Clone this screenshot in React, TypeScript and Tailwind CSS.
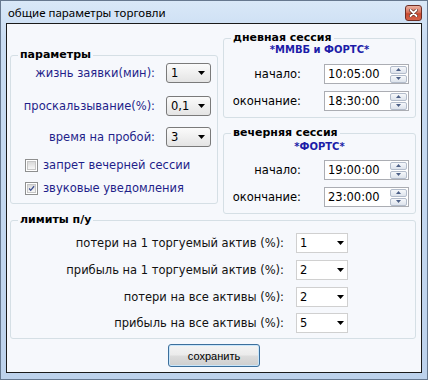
import type { ReactNode } from 'react';

const Arrow = () => (
  <svg width="7" height="4" viewBox="0 0 7 4">
    <path d="M0 0h7L3.5 4z" fill="#000" />
  </svg>
);

function Group({ title, className = '', children }: { title: string; className?: string; children: ReactNode }) {
  return (
    <fieldset className={`rounded-[3px] border border-[#d5dfe5] ${className}`}>
      <legend className="ml-[7px] px-[2px] text-[11px] leading-[14px] font-bold text-black">{title}</legend>
      {children}
    </fieldset>
  );
}

function ParamRow({ label, value, className = '' }: { label: string; value: string; className?: string }) {
  return (
    <div className={`flex items-center justify-end ${className}`}>
      <span className="text-[#1f1f8a]">{label}</span>
      <div className="ml-[11px] flex h-[20px] w-[45px] items-center justify-between rounded-[3px] border border-[#7a7a7a] bg-[linear-gradient(#fbfbfb,#e4e4e4)] pl-[4px] pr-[5px] text-black">
        <span>{value}</span>
        <Arrow />
      </div>
    </div>
  );
}

function Check({ label, checked, className = '' }: { label: string; checked?: boolean; className?: string }) {
  return (
    <div className={`ml-[14px] flex h-[16px] items-center ${className}`}>
      <div className="flex h-[13px] w-[13px] items-center justify-center border border-[#8e8f8f] bg-white">
        <div className="flex h-[9px] w-[9px] items-center justify-center border border-[#c6c6c6] bg-[linear-gradient(#d9d9d9,#f7f7f7)]">
          {checked && (
            <svg width="9" height="9" viewBox="0 0 9 9">
              <path d="M1.5 4.5l2 2.3L7.8 1.6" stroke="#3b4d8f" strokeWidth="1.6" fill="none" />
            </svg>
          )}
        </div>
      </div>
      <span className="ml-[5px] text-[#1f1f8a]">{label}</span>
    </div>
  );
}

function TimeRow({ label, value, className = '' }: { label: string; value: string; className?: string }) {
  return (
    <div className={`flex items-center justify-end pr-[6px] ${className}`}>
      <span className="text-black">{label}</span>
      <div className="ml-[23px] flex h-[20px] w-[85px] items-center justify-between border border-[#abadb3] bg-white pl-[3px] pr-[1px]">
        <span className="text-black">{value}</span>
        <div className="flex flex-col gap-[1px]">
          <div className="flex h-[8px] w-[17px] items-center justify-center rounded-[2px] border border-[#b3bccb] bg-[linear-gradient(#f6f8fb,#dde3ec)]">
            <svg width="5" height="3" viewBox="0 0 5 3"><path d="M0 3h5L2.5 0z" fill="#4c5f86" /></svg>
          </div>
          <div className="flex h-[8px] w-[17px] items-center justify-center rounded-[2px] border border-[#b3bccb] bg-[linear-gradient(#f6f8fb,#dde3ec)]">
            <svg width="5" height="3" viewBox="0 0 5 3"><path d="M0 0h5L2.5 3z" fill="#4c5f86" /></svg>
          </div>
        </div>
      </div>
    </div>
  );
}

function LimitRow({ label, value, className = '' }: { label: string; value: string; className?: string }) {
  return (
    <div className={`flex items-center justify-end pr-[67px] ${className}`}>
      <span className="text-[#111]">{label}</span>
      <div className="ml-[12px] flex h-[20px] w-[52px] items-center justify-between border border-[#d0d0d0] bg-white pl-[3px] pr-[3px] text-black">
        <span>{value}</span>
        <Arrow />
      </div>
    </div>
  );
}

export default function App() {
  return (
    <div className="flex h-[380px] w-[428px] flex-col border border-[#66788f] bg-[linear-gradient(#d9e8f8_0%,#c9dcf2_10%,#bdd2ec_100%)] px-[5px] pb-[6px] font-['DejaVu_Sans',sans-serif] text-[11.5px] leading-[14px]">
      {/* title bar */}
      <div className="flex h-[22px] items-start justify-between">
        <span className="ml-[2px] mt-[5px] font-['Noto_Sans',sans-serif] text-[11.5px] leading-[14px] text-black">
          общие параметры торговли
        </span>
        <div className="mt-[4px] flex h-[16px] w-[17px] items-center justify-center rounded-[3px] border border-[#6e2e25] bg-[linear-gradient(#eab0a0_0%,#d9735d_45%,#c94a30_55%,#d4624a_100%)]">
          <svg width="9" height="8" viewBox="0 0 9 8">
            <path d="M1.5 1l6 6M7.5 1l-6 6" stroke="#5a2a22" strokeWidth="3.2" strokeLinecap="round" />
            <path d="M1.5 1l6 6M7.5 1l-6 6" stroke="#fff" strokeWidth="1.8" strokeLinecap="round" />
          </svg>
        </div>
      </div>

      {/* client area */}
      <div className="flex h-[350px] flex-col border border-[#1a1a1a] bg-[#f6f8fc] pl-[3px] pr-[5px]">
        <div className="flex items-start gap-[5px] pt-[7px]">
          <Group title="параметры" className="mt-[17px] w-[208px] pb-[7px] pr-[6px]">
            <div className="pt-[1px]">
              <ParamRow label="жизнь заявки(мин):" value="1" />
              <ParamRow label="проскальзывание(%):" value="0,1" className="mt-[13px]" />
              <ParamRow label="время на пробой:" value="3" className="mt-[11px]" />
            </div>
            <Check label="запрет вечерней сессии" className="mt-[10px]" />
            <Check label="звуковые уведомления" checked className="mt-[7px]" />
          </Group>

          <div className="flex flex-1 flex-col">
            <Group title="дневная сессия" className="pb-[6px]">
              <div className="-mt-[1px] text-center text-[10px] leading-[12px] font-bold text-[#1c1ca8]">*ММВБ и ФОРТС*</div>
              <TimeRow label="начало:" value="10:05:00" className="mt-[8px]" />
              <TimeRow label="окончание:" value="18:30:00" className="mt-[7px]" />
            </Group>
            <Group title="вечерняя сессия" className="mt-[8px] pb-[6px]">
              <div className="mt-[1px] text-center text-[10px] leading-[12px] font-bold text-[#1c1ca8]">*ФОРТС*</div>
              <TimeRow label="начало:" value="19:00:00" className="mt-[7px]" />
              <TimeRow label="окончание:" value="23:00:00" className="mt-[7px]" />
            </Group>
          </div>
        </div>

        <Group title="лимиты п/у" className="-mt-[1px] pb-[5px]">
          <div className="pt-[6px]">
            <LimitRow label="потери на 1 торгуемый актив (%):" value="1" />
            <LimitRow label="прибыль на 1 торгуемый актив (%):" value="2" className="mt-[7px]" />
            <LimitRow label="потери на все активы (%):" value="2" className="mt-[7px]" />
            <LimitRow label="прибыль на все активы (%):" value="5" className="mt-[6px]" />
          </div>
        </Group>

        <div className="mt-[5px] flex justify-center pl-[2px]">
          <button className="h-[23px] w-[92px] rounded-[3px] border border-[#3c6f9c] bg-[linear-gradient(#f4f4f4_0%,#ebebeb_48%,#dcdcdc_52%,#cfcfcf_100%)] font-['Liberation_Sans',sans-serif] text-[11px] leading-[14px] text-black shadow-[inset_0_0_0_1px_#c9e6fb]">
            сохранить
          </button>
        </div>
      </div>
    </div>
  );
}
